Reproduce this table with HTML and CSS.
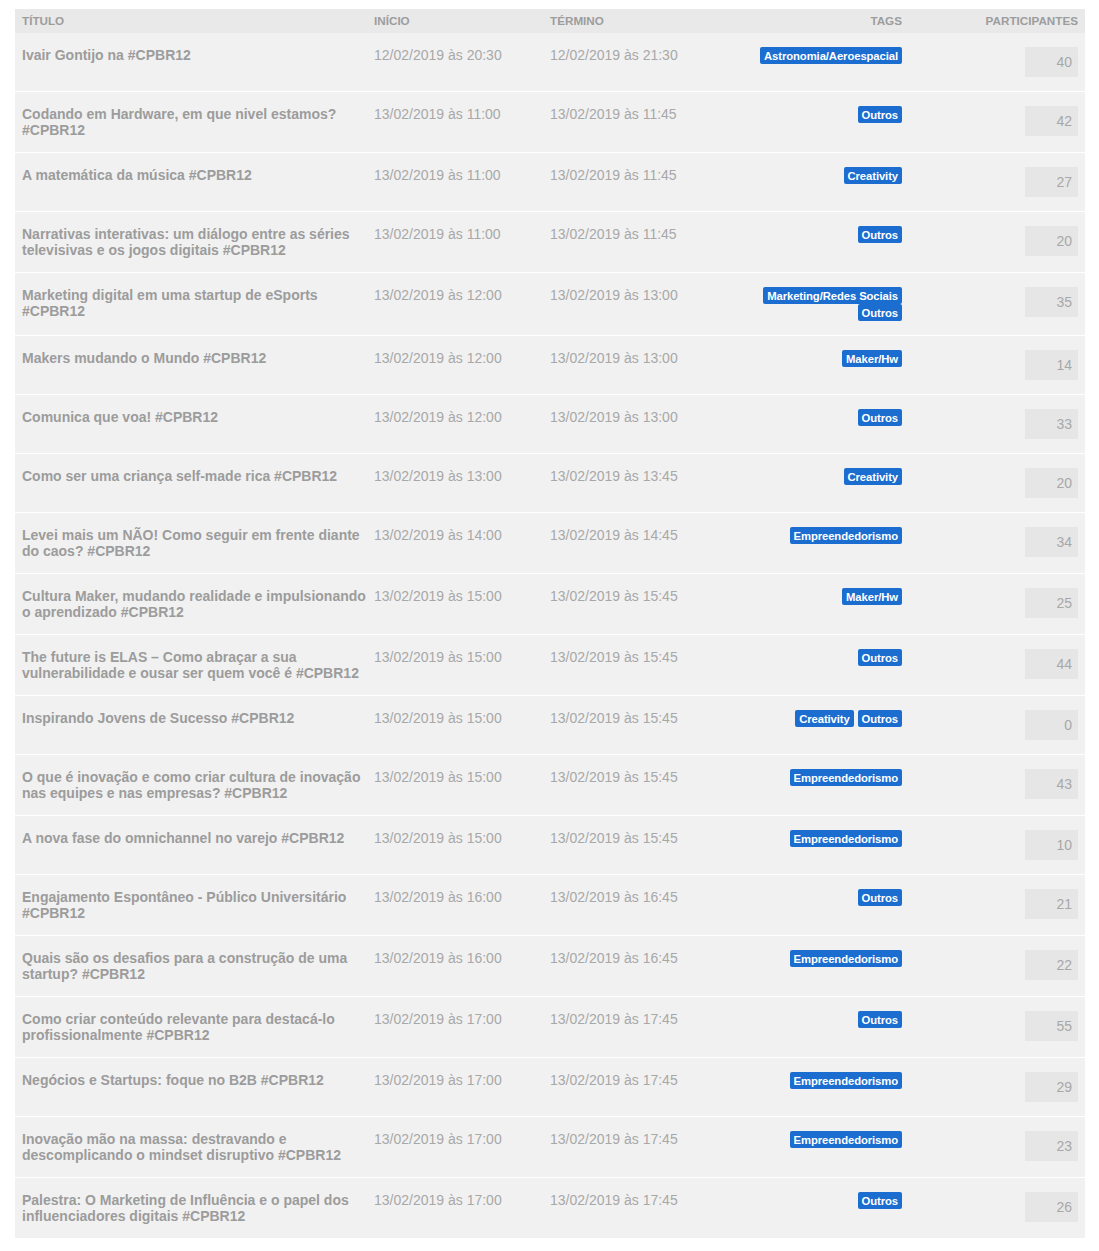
FILE: index.html
```html
<!DOCTYPE html>
<html lang="pt-BR">
<head>
<meta charset="utf-8">
<title>Atividades #CPBR12</title>
<link rel="stylesheet" href="styles.css">
</head>
<body>
<div class="page">
<table class="events">
  <colgroup>
    <col class="c-title"><col class="c-date"><col class="c-date"><col class="c-tags"><col class="c-part">
  </colgroup>
  <thead>
    <tr>
      <th class="left">Título</th>
      <th class="left">Início</th>
      <th class="left">Término</th>
      <th class="right">Tags</th>
      <th class="right">Participantes</th>
    </tr>
  </thead>
  <tbody>
    <tr><td class="title">Ivair Gontijo na #CPBR12</td><td class="date">12/02/2019 às 20:30</td><td class="date">12/02/2019 às 21:30</td><td class="tags"><span class="tag">Astronomia/Aeroespacial</span></td><td class="part"><span class="count">40</span></td></tr>
    <tr><td class="title">Codando em Hardware, em que nivel estamos? #CPBR12</td><td class="date">13/02/2019 às 11:00</td><td class="date">13/02/2019 às 11:45</td><td class="tags"><span class="tag">Outros</span></td><td class="part"><span class="count">42</span></td></tr>
    <tr><td class="title">A matemática da música #CPBR12</td><td class="date">13/02/2019 às 11:00</td><td class="date">13/02/2019 às 11:45</td><td class="tags"><span class="tag">Creativity</span></td><td class="part"><span class="count">27</span></td></tr>
    <tr><td class="title">Narrativas interativas: um diálogo entre as séries televisivas e os jogos digitais #CPBR12</td><td class="date">13/02/2019 às 11:00</td><td class="date">13/02/2019 às 11:45</td><td class="tags"><span class="tag">Outros</span></td><td class="part"><span class="count">20</span></td></tr>
    <tr><td class="title">Marketing digital em uma startup de eSports #CPBR12</td><td class="date">13/02/2019 às 12:00</td><td class="date">13/02/2019 às 13:00</td><td class="tags"><span class="tag">Marketing/Redes Sociais</span> <span class="tag">Outros</span></td><td class="part"><span class="count">35</span></td></tr>
    <tr><td class="title">Makers mudando o Mundo #CPBR12</td><td class="date">13/02/2019 às 12:00</td><td class="date">13/02/2019 às 13:00</td><td class="tags"><span class="tag">Maker/Hw</span></td><td class="part"><span class="count">14</span></td></tr>
    <tr><td class="title">Comunica que voa! #CPBR12</td><td class="date">13/02/2019 às 12:00</td><td class="date">13/02/2019 às 13:00</td><td class="tags"><span class="tag">Outros</span></td><td class="part"><span class="count">33</span></td></tr>
    <tr><td class="title">Como ser uma criança self-made rica #CPBR12</td><td class="date">13/02/2019 às 13:00</td><td class="date">13/02/2019 às 13:45</td><td class="tags"><span class="tag">Creativity</span></td><td class="part"><span class="count">20</span></td></tr>
    <tr><td class="title">Levei mais um NÃO! Como seguir em frente diante do caos? #CPBR12</td><td class="date">13/02/2019 às 14:00</td><td class="date">13/02/2019 às 14:45</td><td class="tags"><span class="tag">Empreendedorismo</span></td><td class="part"><span class="count">34</span></td></tr>
    <tr><td class="title">Cultura Maker, mudando realidade e impulsionando o aprendizado #CPBR12</td><td class="date">13/02/2019 às 15:00</td><td class="date">13/02/2019 às 15:45</td><td class="tags"><span class="tag">Maker/Hw</span></td><td class="part"><span class="count">25</span></td></tr>
    <tr><td class="title">The future is ELAS – Como abraçar a sua vulnerabilidade e ousar ser quem você é #CPBR12</td><td class="date">13/02/2019 às 15:00</td><td class="date">13/02/2019 às 15:45</td><td class="tags"><span class="tag">Outros</span></td><td class="part"><span class="count">44</span></td></tr>
    <tr><td class="title">Inspirando Jovens de Sucesso #CPBR12</td><td class="date">13/02/2019 às 15:00</td><td class="date">13/02/2019 às 15:45</td><td class="tags"><span class="tag">Creativity</span> <span class="tag">Outros</span></td><td class="part"><span class="count">0</span></td></tr>
    <tr><td class="title">O que é inovação e como criar cultura de inovação nas equipes e nas empresas? #CPBR12</td><td class="date">13/02/2019 às 15:00</td><td class="date">13/02/2019 às 15:45</td><td class="tags"><span class="tag">Empreendedorismo</span></td><td class="part"><span class="count">43</span></td></tr>
    <tr><td class="title">A nova fase do omnichannel no varejo #CPBR12</td><td class="date">13/02/2019 às 15:00</td><td class="date">13/02/2019 às 15:45</td><td class="tags"><span class="tag">Empreendedorismo</span></td><td class="part"><span class="count">10</span></td></tr>
    <tr><td class="title">Engajamento Espontâneo - Público Universitário #CPBR12</td><td class="date">13/02/2019 às 16:00</td><td class="date">13/02/2019 às 16:45</td><td class="tags"><span class="tag">Outros</span></td><td class="part"><span class="count">21</span></td></tr>
    <tr><td class="title">Quais são os desafios para a construção de uma startup? #CPBR12</td><td class="date">13/02/2019 às 16:00</td><td class="date">13/02/2019 às 16:45</td><td class="tags"><span class="tag">Empreendedorismo</span></td><td class="part"><span class="count">22</span></td></tr>
    <tr><td class="title">Como criar conteúdo relevante para destacá-lo profissionalmente #CPBR12</td><td class="date">13/02/2019 às 17:00</td><td class="date">13/02/2019 às 17:45</td><td class="tags"><span class="tag">Outros</span></td><td class="part"><span class="count">55</span></td></tr>
    <tr><td class="title">Negócios e Startups: foque no B2B #CPBR12</td><td class="date">13/02/2019 às 17:00</td><td class="date">13/02/2019 às 17:45</td><td class="tags"><span class="tag">Empreendedorismo</span></td><td class="part"><span class="count">29</span></td></tr>
    <tr><td class="title">Inovação mão na massa: destravando e descomplicando o mindset disruptivo #CPBR12</td><td class="date">13/02/2019 às 17:00</td><td class="date">13/02/2019 às 17:45</td><td class="tags"><span class="tag">Empreendedorismo</span></td><td class="part"><span class="count">23</span></td></tr>
    <tr><td class="title">Palestra: O Marketing de Influência e o papel dos influenciadores digitais #CPBR12</td><td class="date">13/02/2019 às 17:00</td><td class="date">13/02/2019 às 17:45</td><td class="tags"><span class="tag">Outros</span></td><td class="part"><span class="count">26</span></td></tr>
  </tbody>
</table>
</div>
</body>
</html>
```

FILE: styles.css
```css
* { box-sizing: border-box; }

body {
  margin: 0;
  background: #ffffff;
  font-family: "Liberation Sans", Arial, Helvetica, sans-serif;
  font-size: 14px;
}

.page {
  padding: 9px 14px 0 15px;
}

.events {
  width: 1070px;
  border-collapse: collapse;
  table-layout: fixed;
}

.c-title { width: 352px; }
.c-date { width: 176px; }
.c-tags { width: 190px; }
.c-part { width: 176px; }

.events thead th {
  height: 24px;
  background: #e9e9e9;
  color: #9d9d9d;
  font-size: 11.7px;
  font-weight: bold;
  text-transform: uppercase;
  vertical-align: middle;
  padding: 0 7px;
  line-height: 14px;
}

.events th.left { text-align: left; }
.events th.right { text-align: right; }

.events tbody td {
  background: #f1f1f1;
  vertical-align: top;
  padding: 14px 0 14px 7px;
  line-height: 16px;
}

.events tbody tr + tr td {
  border-top: 1px solid #ffffff;
}

.events td.title {
  font-weight: bold;
  color: #9c9c9c;
}

.events td.date {
  color: #a8a8a8;
}

.events td.tags {
  text-align: right;
  padding-right: 7px;
  line-height: 17px;
}

.tag {
  display: inline-block;
  vertical-align: top;
  height: 17px;
  line-height: 18px;
  padding: 0 4px;
  background: #1b6dcf;
  color: #ffffff;
  font-size: 11.3px;
  font-weight: bold;
  letter-spacing: -0.1px;
  border-radius: 2px;
}

.events td.part {
  padding-right: 7px;
}

.count {
  display: block;
  width: 53px;
  height: 30px;
  margin-left: auto;
  background: #e6e6e6;
  color: #a8a8a8;
  text-align: right;
  padding-right: 6px;
  line-height: 30px;
  font-size: 14px;
}
```
